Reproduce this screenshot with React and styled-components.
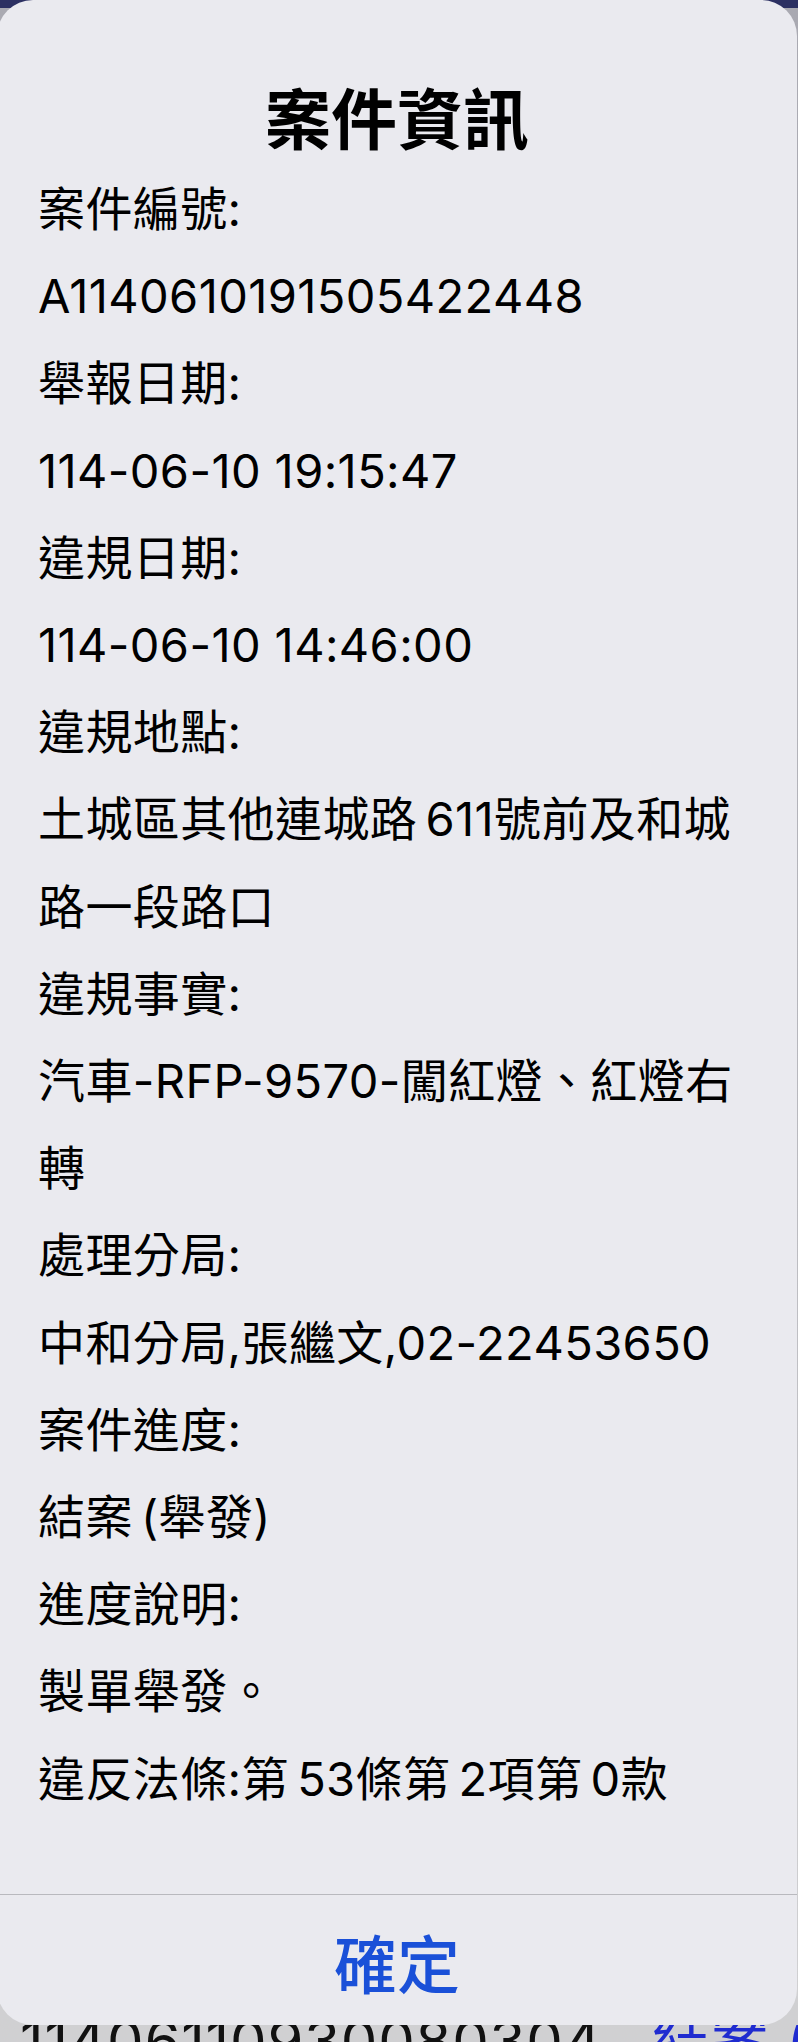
import React from 'react';
import styled, { createGlobalStyle } from 'styled-components';

const GlobalStyle = createGlobalStyle`
  html, body {
    margin: 0;
    padding: 0;
  }
  body {
    background: #cfcfd2;
    font-family: "Inter", "Noto Sans CJK TC", sans-serif;
  }
`;

// dimmed page behind the alert
const Screen = styled.div`
  width: 798px;
  height: 2042px;
  overflow: hidden;
  display: flex;
  flex-direction: column;
  background: linear-gradient(
    to bottom,
    #2c3062 0,
    #2c3062 8px,
    #a9a9b1 8px,
    #b6b6bc 1000px,
    #d0d0d2 2000px
  );
`;

// the alert card
const Dialog = styled.div`
  flex: 0 0 2025px;
  margin: 0 1px 0 -3px;
  background: #eaeaef;
  border-radius: 36px;
  display: flex;
  flex-direction: column;
  position: relative;
  z-index: 1;
`;

const Title = styled.h1`
  margin: 0;
  padding-top: 75px;
  font-family: "Noto Sans CJK TC", sans-serif;
  font-size: 66px;
  line-height: 80px;
  font-weight: 700;
  text-align: center;
  color: #000;
`;

const Body = styled.div`
  flex: 1;
  padding: 10px 0 0 41px;
`;

const Line = styled.div`
  font-size: 47px;
  line-height: 87.2px;
  letter-spacing: 0.4px;
  color: #000;
  white-space: nowrap;
`;

const Divider = styled.div`
  height: 1px;
  background: #b9b9be;
`;

const ConfirmButton = styled.button`
  flex: 0 0 130px;
  border: 0;
  padding: 0;
  background: transparent;
  color: #1a50d8;
  font-family: "Noto Sans CJK TC", sans-serif;
  font-size: 63px;
  font-weight: 500;
  cursor: pointer;
`;

// sliver of the list visible under the card
const BehindRow = styled.div`
  flex: 0 0 17px;
  overflow: hidden;
  display: flex;
  align-items: flex-start;
  padding-left: 20px;
  gap: 50px;
`;

const BehindText = styled.span`
  font-size: 58px;
  line-height: 58px;
  letter-spacing: 0.8px;
  margin-top: -13px;
  white-space: nowrap;
  color: ${(p) => (p.$blue ? '#1f2bd0' : '#111')};
`;

const sp = '\u2006';

const lines = [
  '案件編號:',
  'A11406101915054' + '22448',
  '舉報日期:',
  '114-06-10 19:15:47',
  '違規日期:',
  '114-06-10 14:46:00',
  '違規地點:',
  `土城區其他連城路${sp}611號前及和城`,
  '路一段路口',
  '違規事實:',
  '汽車-RFP-9570-闖紅燈、紅燈右',
  '轉',
  '處理分局:',
  '中和分局,張繼文,02-22453650',
  '案件進度:',
  `結案${sp}(舉發)`,
  '進度說明:',
  '製單舉發。',
  `違反法條:第${sp}53條第${sp}2項第${sp}0款`,
];

export default function App() {
  return (
    <>
      <GlobalStyle />
      <Screen>
        <Dialog>
          <Title>案件資訊</Title>
          <Body>
            {lines.map((t, i) => (
              <Line key={i}>{t}</Line>
            ))}
          </Body>
          <Divider />
          <ConfirmButton>確定</ConfirmButton>
        </Dialog>
        <BehindRow>
          <BehindText>11406110930080304</BehindText>
          <BehindText $blue>結案 (</BehindText>
        </BehindRow>
      </Screen>
    </>
  );
}
